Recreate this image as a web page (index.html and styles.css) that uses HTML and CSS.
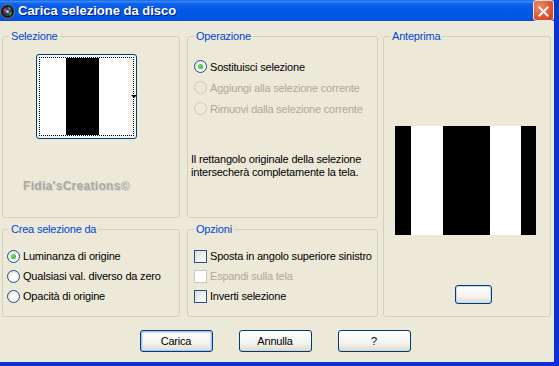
FILE: index.html
```html
<!DOCTYPE html>
<html lang="it">
<head>
<meta http-equiv="content-type" content="text/html; charset=utf-8">
<link rel="stylesheet" href="styles.css">
<title>Carica selezione da disco</title>
</head>
<body>

<div class="window">
  <div class="titlebar">
    <svg class="app-icon" width="15" height="15" viewBox="0 0 15 15">
      <circle cx="7.5" cy="7.5" r="7" fill="#1a1a22" stroke="#6d7a8a" stroke-width="1"/>
      <circle cx="7.5" cy="7.5" r="4.5" fill="#3a3f48"/>
      <path d="M3 6 L6 4 L6 8 Z" fill="#d83a8c"/>
      <path d="M9 9 L12 8 L10 12 Z" fill="#38b84a"/>
      <path d="M8 3 L11 4 L9 6 Z" fill="#3fa0e0"/>
      <circle cx="7.5" cy="7.5" r="1.5" fill="#c0c8d0"/>
    </svg>
    <span class="title">Carica selezione da disco</span>
    <span class="close">
      <svg width="21" height="21" viewBox="0 0 21 21">
        <path d="M6 6 L15 15 M15 6 L6 15" stroke="#fff" stroke-width="2.2" stroke-linecap="square"/>
      </svg>
    </span>
  </div>

  <div class="client">
    <div class="groups">

      <fieldset class="group g-sel">
        <legend>Selezione</legend>
        <button class="thumb">
          <span class="thumb-inner"><span class="band"></span></span>
          <span class="drop"></span>
        </button>
        <div class="watermark">Fidia'sCreations©</div>
      </fieldset>

      <fieldset class="group g-op">
        <legend>Operazione</legend>
        <div class="opts first">
          <div class="opt"><span class="radio on"></span>Sostituisci selezione</div>
          <div class="opt off"><span class="radio"></span>Aggiungi alla selezione corrente</div>
          <div class="opt off"><span class="radio"></span>Rimuovi dalla selezione corrente</div>
        </div>
        <p class="note">Il rettangolo originale della selezione<br>intersecherà completamente la tela.</p>
      </fieldset>

      <fieldset class="group g-prev">
        <legend>Anteprima</legend>
        <div class="preview">
          <span class="pb k1"></span><span class="pb w1"></span><span class="pb k2"></span><span class="pb w2"></span><span class="pb k3"></span>
        </div>
        <button class="btn small"></button>
      </fieldset>

      <fieldset class="group g-src">
        <legend>Crea selezione da</legend>
        <div class="opts low">
          <div class="opt row"><span class="radio on"></span>Luminanza di origine</div>
          <div class="opt row"><span class="radio"></span>Qualsiasi val. diverso da zero</div>
          <div class="opt row"><span class="radio"></span>Opacità di origine</div>
        </div>
      </fieldset>

      <fieldset class="group g-opt">
        <legend>Opzioni</legend>
        <div class="opts low">
          <div class="opt row"><span class="check"></span>Sposta in angolo superiore sinistro</div>
          <div class="opt row off"><span class="check"></span>Espandi sulla tela</div>
          <div class="opt row"><span class="check"></span>Inverti selezione</div>
        </div>
      </fieldset>

    </div>

    <div class="actions">
      <button class="btn default">Carica</button>
      <button class="btn">Annulla</button>
      <button class="btn">?</button>
    </div>
  </div>
</div>

</body>
</html>
```

FILE: styles.css
```css
html, body {
  margin: 0;
  background: #ece9d8;
  font-family: 'Liberation Sans', 'Arial', sans-serif;
  font-size: 11px;
  letter-spacing: -0.2px;
  color: black;
}

.window {
  width: 559px;
  height: 366px;
  display: flex;
  flex-direction: column;
  overflow: hidden;
}

/* title bar */
.titlebar {
  height: 21px;
  flex: none;
  display: flex;
  align-items: center;
  background: linear-gradient(to bottom, #0a5ff0 0%, #3b8cf5 6%, #0f62ea 18%, #0058e6 50%, #0256e6 85%, #0a4bd6 100%);
  border-right: 5px solid #0838c8;
}

.app-icon {
  margin-left: 0;
  margin-top: 1px;
}

.title {
  margin-left: 3px;
  color: white;
  font-weight: bold;
  font-size: 13px;
  letter-spacing: 0;
  text-shadow: 1px 1px #0a1883;
  flex: 1;
}

.close {
  width: 21px;
  height: 21px;
  box-sizing: border-box;
  border: 1px solid #f3e6e0;
  border-radius: 3px;
  background: radial-gradient(circle at 30% 30%, #f08a68, #e0532e 60%, #c4401f);
  display: flex;
  margin-top: -1px;
}

/* client area */
.client {
  flex: 1;
  display: flex;
  flex-direction: column;
  padding: 9px 0 0 2px;
  border-right: 5px solid #0831d9;
  border-bottom: 4px solid #0831d9;
}

.groups {
  display: grid;
  grid-template-columns: 178px 191px 166px;
  grid-template-rows: 188px 94px;
  column-gap: 7px;
  row-gap: 5px;
}

.group {
  margin: 0;
  padding: 0;
  min-width: 0;
  box-sizing: border-box;
  border: 1px solid #d0d0bf;
  border-radius: 3px;
}

.group legend {
  margin-left: 6px;
  padding: 0 2px;
  color: #0046d5;
  line-height: 13px;
}

.g-sel { grid-column: 1; grid-row: 1; }
.g-op { grid-column: 2; grid-row: 1; }
.g-prev { grid-column: 3; grid-row: 1 / 3; margin-left: -2px; }
.g-src { grid-column: 1; grid-row: 2; }
.g-opt { grid-column: 2; grid-row: 2; }

/* selection thumbnail button */
.thumb {
  position: relative;
  display: block;
  width: 101px;
  height: 85px;
  margin: 11px 0 0 33px;
  padding: 2px;
  box-sizing: border-box;
  border: 1px solid #003c74;
  border-radius: 3px;
  background: #f4f3ee;
}

.thumb-inner {
  display: block;
  height: 100%;
  box-sizing: border-box;
  border: 1px dotted black;
  background: linear-gradient(to right, white 0, white 88px, #f0f0ec 88px);
}

.band {
  display: block;
  margin-left: 26px;
  width: 33px;
  height: 100%;
  background: black;
}

.drop {
  position: absolute;
  left: 94px;
  top: 40px;
  width: 0;
  height: 0;
  border-left: 3px solid transparent;
  border-right: 3px solid transparent;
  border-top: 3px solid black;
}

.watermark {
  margin: 40px 0 0 20px;
  font-size: 12px;
  font-weight: bold;
  color: #a8a8a4;
  text-shadow: 1px 1px #d6d3c6;
  letter-spacing: 0.3px;
}

/* options */
.opts.first { margin: 13px 0 0 6px; }
.opts.low { margin: 10px 0 0 6px; }
.g-src .opts.low { margin-left: 4px; }

.opt {
  height: 21px;
  display: flex;
  align-items: center;
  white-space: nowrap;
}

.opt.row { height: 20px; }

.opt.off { color: #aca899; }

.radio {
  flex: none;
  width: 13px;
  height: 13px;
  box-sizing: border-box;
  border: 1px solid #1c5180;
  border-radius: 50%;
  background: radial-gradient(circle at 60% 60%, #ffffff 30%, #dcd9cf 100%);
  margin-right: 3px;
  display: flex;
  align-items: center;
  justify-content: center;
}

.radio.on::after {
  content: '';
  width: 5px;
  height: 5px;
  border-radius: 50%;
  background: radial-gradient(circle at 40% 40%, #6ee06e, #21a121);
}

.opt.off .radio {
  border-color: #cac8bb;
  background: #ece9d8;
}

.check {
  flex: none;
  width: 13px;
  height: 13px;
  box-sizing: border-box;
  border: 1px solid #1c5180;
  background: linear-gradient(135deg, #dcdcd7, #ffffff);
  margin-right: 3px;
}

.opt.off .check {
  border-color: #cac8bb;
  background: #ffffff;
}

.note {
  margin: 34px 0 0 3px;
  line-height: 13px;
}

/* preview */
.preview {
  display: flex;
  width: 141px;
  height: 109px;
  margin: 83px 0 0 11px;
}

.pb { height: 100%; }
.k1 { width: 16px; background: black; }
.w1 { width: 32px; background: white; }
.k2 { width: 47px; background: black; }
.w2 { width: 31px; background: white; }
.k3 { width: 15px; background: black; }

/* buttons */
.btn {
  width: 73px;
  height: 22px;
  padding: 0;
  box-sizing: border-box;
  border: 1px solid #003c74;
  border-radius: 3px;
  background: linear-gradient(to bottom, #ffffff 0%, #f4f3ee 60%, #e3e1d6 90%, #d6d0c5 100%);
  font-family: 'Liberation Sans', 'Arial', sans-serif;
  font-size: 11px;
  letter-spacing: -0.2px;
  color: black;
}

.btn.default {
  box-shadow: inset 0 0 0 1px #a6c4f3, inset 0 0 0 2px #cee0fb;
}

.btn.small {
  display: block;
  width: 37px;
  height: 19px;
  margin: 50px 0 0 71px;
  box-shadow: inset 0 0 0 1px #c4d8f6;
}

.actions {
  display: flex;
  justify-content: center;
  gap: 26px;
  margin-top: 13px;
  padding-right: 6px;
}
```
